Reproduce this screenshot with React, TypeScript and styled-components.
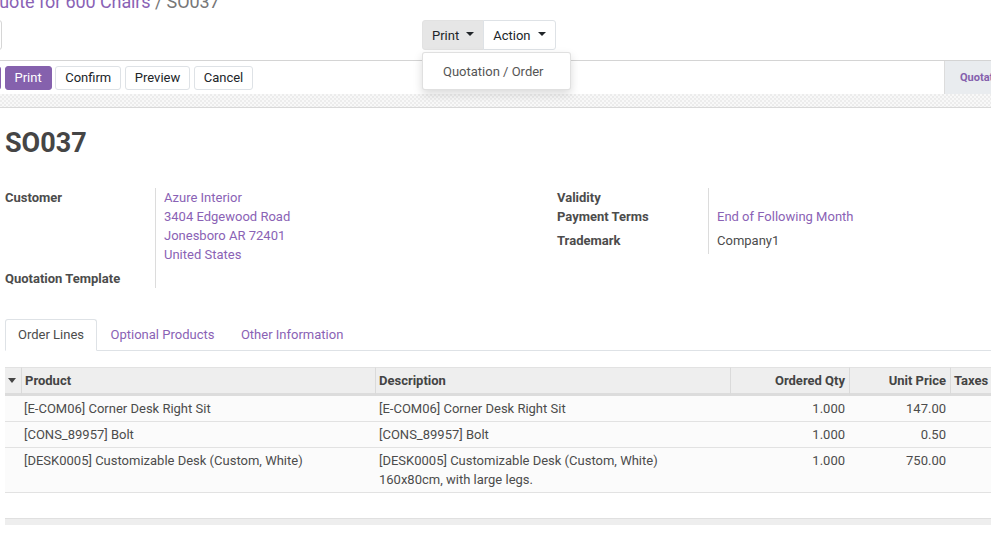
import React from "react";
import styled, { createGlobalStyle } from "styled-components";

const PURPLE = "#8561ad";
const LINK = "#8a62b5";
const TEXT = "#4c4c4c";

const Global = createGlobalStyle`
  html, body { margin: 0; padding: 0; background: #fff; }
  body {
    font-family: Roboto, "Noto Sans", "Liberation Sans", sans-serif;
    font-size: 13px;
    color: ${TEXT};
    overflow: hidden;
  }
  * { box-sizing: border-box; }
`;

const Page = styled.div`
  width: 991px;
  height: 547px;
  overflow: hidden;
  position: relative;
  background: #fff;
`;

const Breadcrumb = styled.div`
  margin: -10px 0 0 -13px;
  height: 22px;
  font-size: 18px;
  line-height: 24px;
  white-space: nowrap;
  color: #777;
  letter-spacing: -0.1px;
`;

const CrumbLink = styled.span`
  color: ${LINK};
`;

const CPRow = styled.div`
  display: flex;
  align-items: flex-start;
  margin-top: 8px;
  height: 30px;
`;

const SearchStub = styled.div`
  width: 100px;
  height: 30px;
  margin-left: -98px;
  border: 1px solid #d6d6d6;
  border-radius: 3px;
  flex: none;
`;

const BtnGroup = styled.div`
  position: relative;
  display: flex;
  margin-left: 420px;
`;

const GroupBtn = styled.div<{ $active?: boolean; $first?: boolean }>`
  height: 30px;
  display: flex;
  align-items: center;
  padding: 0 9px;
  border: 1px solid ${(p) => (p.$active ? "#e2e2e2" : "#dee2e6")};
  background: ${(p) => (p.$active ? "#e6e6e6" : "#fff")};
  color: #212529;
  font-size: 13px;
  border-radius: ${(p) => (p.$first ? "3px 0 0 3px" : "0 3px 3px 0")};
  margin-left: ${(p) => (p.$first ? "0" : "-1px")};
  white-space: nowrap;
  &::after {
    content: "";
    display: inline-block;
    margin-left: 7px;
    margin-top: -2px;
    border-top: 4px solid #212529;
    border-left: 4px solid transparent;
    border-right: 4px solid transparent;
  }
`;

const DropMenu = styled.div`
  position: absolute;
  top: calc(100% + 2px);
  left: 0;
  min-width: 149px;
  background: #fff;
  border: 1px solid rgba(0, 0, 0, 0.12);
  border-radius: 3px;
  box-shadow: 0 4px 10px rgba(0, 0, 0, 0.15);
  padding: 5px 0;
  z-index: 10;
`;

const DropItem = styled.div`
  padding: 4px 20px 2px;
  line-height: 20px;
  color: #555;
  white-space: nowrap;
`;

const StatusBar = styled.div`
  margin-top: 10px;
  height: 34px;
  border-top: 1px solid #d4d4d4;
  display: flex;
  align-items: center;
  gap: 3.5px;
`;

const SBtn = styled.div<{ $primary?: boolean; $stub?: boolean }>`
  height: 24px;
  display: flex;
  align-items: center;
  padding: 0 9px;
  border-radius: 3px;
  border: 1px solid ${(p) => (p.$primary ? PURPLE : "#dee2e6")};
  background: ${(p) => (p.$primary ? PURPLE : "#fff")};
  color: ${(p) => (p.$primary ? "#fff" : "#212529")};
  white-space: nowrap;
  flex: none;
  margin-left: ${(p) => (p.$stub ? "-59px" : "0")};
  width: ${(p) => (p.$stub ? "60px" : "auto")};
  overflow: hidden;
`;

const StageBox = styled.div`
  margin-left: auto;
  align-self: stretch;
  width: 47px;
  background: #e9ecef;
  border-left: 1px solid #dcdcdc;
  padding-left: 15px;
  display: flex;
  align-items: center;
  overflow: hidden;
  white-space: nowrap;
  font-size: 11px;
  font-weight: bold;
  color: ${PURPLE};
`;

const Pattern = styled.div`
  height: 13px;
  background: repeating-conic-gradient(#ececec 0 25%, #f8f8f8 0 50%) 0 0 / 4px 4px;
`;

const Sheet = styled.div`
  border-top: 1px solid #d8d8d8;
  padding: 18px 0 0 5px;
`;

const Title = styled.h1`
  margin: 0;
  font-size: 27px;
  line-height: 34px;
  font-weight: bold;
  color: #454545;
`;

const Groups = styled.div`
  margin-top: 28px;
  display: grid;
  grid-template-columns: 552px 1fr;
`;

const FieldGroup = styled.div<{ $label: number }>`
  display: grid;
  grid-template-columns: ${(p) => p.$label}px 1fr;
  align-content: start;
  line-height: 19px;
`;

const Label = styled.div<{ $pb?: number }>`
  font-weight: bold;
  color: ${TEXT};
  padding-bottom: ${(p) => p.$pb ?? 0}px;
`;

const Value = styled.div<{ $pb?: number; $link?: boolean }>`
  border-left: 1px solid #dcdcdc;
  padding: 0 0 ${(p) => p.$pb ?? 0}px 8px;
  color: ${(p) => (p.$link ? LINK : TEXT)};
`;

const Nav = styled.div`
  margin-top: 31px;
  display: flex;
  border-bottom: 1px solid #dee2e6;
`;

const Tab = styled.div<{ $active?: boolean }>`
  padding: 0 12px;
  line-height: 30px;
  border: 1px solid ${(p) => (p.$active ? "#dee2e6" : "transparent")};
  border-bottom-color: ${(p) => (p.$active ? "#fff" : "transparent")};
  border-radius: 3px 3px 0 0;
  margin-bottom: -1px;
  margin-right: 0.5px;
  background: ${(p) => (p.$active ? "#fff" : "transparent")};
  color: ${(p) => (p.$active ? TEXT : LINK)};
  white-space: nowrap;
`;

const TabContent = styled.div`
  padding-top: 16px;
`;

const Table = styled.table`
  border-collapse: separate;
  border-spacing: 0;
  table-layout: fixed;
  width: 1045px;
`;

const Th = styled.th<{ $right?: boolean; $sep?: boolean }>`
  height: 29px;
  background: #eeeeee;
  border-top: 1px solid #e2e2e2;
  border-bottom: 3px solid #dcdcdc;
  border-left: ${(p) => (p.$sep ? "1px solid #dadada" : "none")};
  padding: 0 4px 0 3px;
  font-weight: bold;
  text-align: ${(p) => (p.$right ? "right" : "left")};
  color: #444;
  white-space: nowrap;
  overflow: hidden;
  vertical-align: middle;
`;

const Td = styled.td<{ $right?: boolean }>`
  padding: 3px 4px;
  line-height: 19px;
  border-bottom: 1px solid #e2e2e2;
  background: #fbfbfb;
  text-align: ${(p) => (p.$right ? "right" : "left")};
  vertical-align: top;
  color: ${TEXT};
  overflow: hidden;
`;

const ProductTd = styled(Td)`
  padding-left: 3px;
`;

const EmptyTd = styled.td`
  height: 25px;
`;

const FootTd = styled.td`
  height: 7px;
  background: #eeeeee;
  border-top: 1px solid #e0e0e0;
`;

const Caret = () => (
  <svg width="8" height="5" viewBox="0 0 8 5" style={{ display: "block", marginLeft: 0 }}>
    <path d="M0 0 H8 L4 5 Z" fill="#444" />
  </svg>
);

const lines = [
  { p: "[E-COM06] Corner Desk Right Sit", d: ["[E-COM06] Corner Desk Right Sit"], q: "1.000", u: "147.00" },
  { p: "[CONS_89957] Bolt", d: ["[CONS_89957] Bolt"], q: "1.000", u: "0.50" },
  {
    p: "[DESK0005] Customizable Desk (Custom, White)",
    d: ["[DESK0005] Customizable Desk (Custom, White)", "160x80cm, with large legs."],
    q: "1.000",
    u: "750.00",
  },
];

export default function App() {
  return (
    <Page>
      <Global />
      <Breadcrumb>
        <CrumbLink>Quote for 600 Chairs</CrumbLink> / SO037
      </Breadcrumb>
      <CPRow>
        <SearchStub />
        <BtnGroup>
          <GroupBtn $first $active>Print</GroupBtn>
          <GroupBtn>Action</GroupBtn>
          <DropMenu>
            <DropItem>Quotation / Order</DropItem>
          </DropMenu>
        </BtnGroup>
      </CPRow>
      <StatusBar>
        <SBtn $primary $stub>Send</SBtn>
        <SBtn $primary>Print</SBtn>
        <SBtn>Confirm</SBtn>
        <SBtn>Preview</SBtn>
        <SBtn>Cancel</SBtn>
        <StageBox>Quotation</StageBox>
      </StatusBar>
      <Pattern />
      <Sheet>
        <Title>SO037</Title>
        <Groups>
          <FieldGroup $label={150}>
            <Label $pb={5}>Customer</Label>
            <Value $pb={5} $link>
              Azure Interior
              <br />
              3404 Edgewood Road
              <br />
              Jonesboro AR 72401
              <br />
              United States
            </Value>
            <Label>Quotation Template</Label>
            <Value />
          </FieldGroup>
          <FieldGroup $label={151}>
            <Label>Validity</Label>
            <Value />
            <Label $pb={5}>Payment Terms</Label>
            <Value $pb={5} $link>End of Following Month</Value>
            <Label $pb={4}>Trademark</Label>
            <Value $pb={4}>Company1</Value>
          </FieldGroup>
        </Groups>
        <Nav>
          <Tab $active>Order Lines</Tab>
          <Tab>Optional Products</Tab>
          <Tab>Other Information</Tab>
        </Nav>
        <TabContent>
          <Table>
            <colgroup>
              <col style={{ width: 16 }} />
              <col style={{ width: 354 }} />
              <col style={{ width: 355 }} />
              <col style={{ width: 119 }} />
              <col style={{ width: 101 }} />
              <col style={{ width: 100 }} />
            </colgroup>
            <thead>
              <tr>
                <Th><Caret /></Th>
                <Th $sep>Product</Th>
                <Th $sep>Description</Th>
                <Th $sep $right>Ordered Qty</Th>
                <Th $sep $right>Unit Price</Th>
                <Th $sep>Taxes</Th>
              </tr>
            </thead>
            <tbody>
              {lines.map((l) => (
                <tr key={l.p}>
                  <Td />
                  <ProductTd>{l.p}</ProductTd>
                  <Td>
                    {l.d.map((x, i) => (
                      <div key={i}>{x}</div>
                    ))}
                  </Td>
                  <Td $right>{l.q}</Td>
                  <Td $right>{l.u}</Td>
                  <Td />
                </tr>
              ))}
              <tr>
                <EmptyTd colSpan={6} />
              </tr>
            </tbody>
            <tfoot>
              <tr>
                <FootTd colSpan={6} />
              </tr>
            </tfoot>
          </Table>
        </TabContent>
      </Sheet>
    </Page>
  );
}
